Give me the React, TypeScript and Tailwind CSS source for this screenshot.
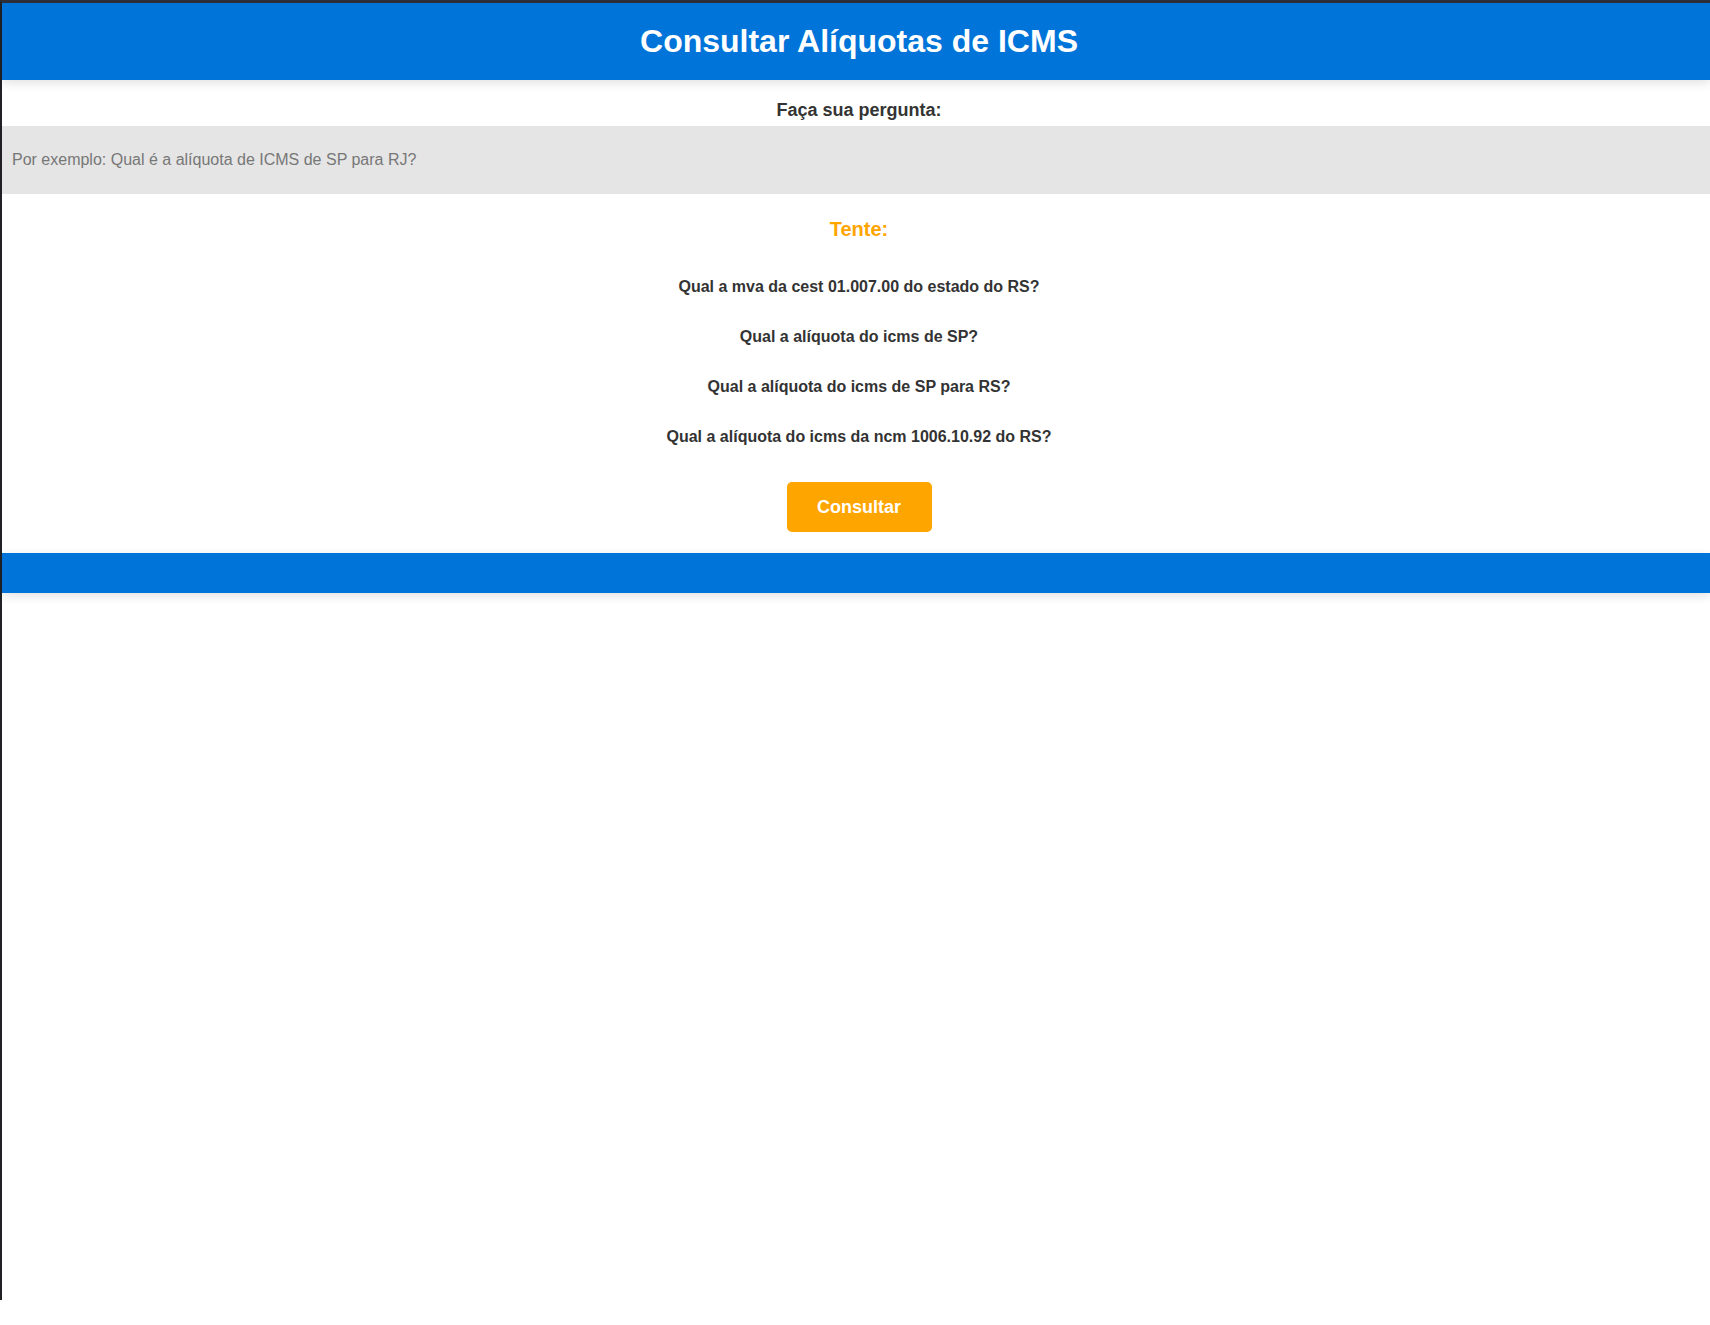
import React, { useState } from 'react';

const EXAMPLES = [
  'Qual a mva da cest 01.007.00 do estado do RS?',
  'Qual a alíquota do icms de SP?',
  'Qual a alíquota do icms de SP para RS?',
  'Qual a alíquota do icms da ncm 1006.10.92 do RS?',
];

export default function App() {
  const [question, setQuestion] = useState('');

  return (
    <div className="min-h-[1325px] w-full bg-white font-['Liberation_Sans',Arial,sans-serif] text-[#333]">
      <div className="flex h-[1300px] flex-col border-l-2 border-t-[3px] border-l-[#202124] border-t-[#2d3038]">
        {/* Header */}
        <header className="relative z-10 flex h-[77px] items-center justify-center bg-[#0074d9] pl-[6px] shadow-[0_3px_10px_rgba(0,0,0,0.12)]">
          <h1 className="text-[32px] font-bold leading-[37px] text-white">Consultar Alíquotas de ICMS</h1>
        </header>

        {/* Form */}
        <main className="flex flex-col">
          <label htmlFor="pergunta" className="mt-[20px] pl-[6px] text-center text-[18px] font-bold leading-[21px] text-[#333]">
            Faça sua pergunta:
          </label>
          <input
            id="pergunta"
            value={question}
            onChange={(e) => setQuestion(e.target.value)}
            placeholder="Por exemplo: Qual é a alíquota de ICMS de SP para RJ?"
            className="mt-[5px] h-[68px] w-full border-0 bg-[#e5e5e5] pl-[10px] text-[16px] text-[#333] outline-none placeholder:text-[#777]"
          />

          <h2 className="mt-[24px] pl-[6px] text-center text-[20px] font-bold leading-[23px] text-[#ffa500]">Tente:</h2>

          <ul className="mt-[37px] flex flex-col items-center gap-[32px] pl-[6px]">
            {EXAMPLES.map((q) => (
              <li key={q} className="flex h-[18px] items-center leading-[18px]">
                <button onClick={() => setQuestion(q)} className="cursor-pointer text-[16px] font-bold leading-[18px] text-[#333]">
                  {q}
                </button>
              </li>
            ))}
          </ul>

          <div className="mt-[36px] flex justify-center pl-[6px]">
            <button className="flex h-[50px] w-[145px] items-center justify-center rounded-[5px] bg-[#ffa500] text-[18px] font-bold leading-[20px] text-white">
              Consultar
            </button>
          </div>
        </main>

        {/* Footer */}
        <footer className="mt-[21px] h-[40px] bg-[#0074d9] shadow-[0_3px_10px_rgba(0,0,0,0.12)]"></footer>
      </div>
    </div>
  );
}
